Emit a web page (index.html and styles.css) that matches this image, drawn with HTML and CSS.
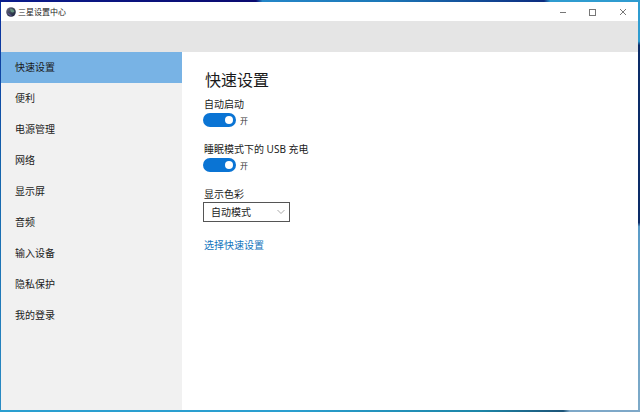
FILE: index.html
```html
<!DOCTYPE html>
<html lang="zh-CN">
<head>
  <meta charset="UTF-8" />
  <title>三星设置中心</title>
  <meta name="viewport" content="width=device-width, initial-scale=1.0" />
  <link rel="stylesheet" href="styles.css">
</head>
<body>

<div class="window">

  <!-- Title bar -->
  <header class="titlebar">
    <svg class="app-icon" viewBox="0 0 10 10" aria-hidden="true">
      <defs>
        <linearGradient id="orb" x1="0" y1="0" x2="1" y2="1">
          <stop offset="0" stop-color="#7c6a90" />
          <stop offset="0.45" stop-color="#3c4a58" />
          <stop offset="1" stop-color="#1b1c3c" />
        </linearGradient>
      </defs>
      <circle cx="5" cy="5" r="4.8" fill="url(#orb)" />
      <path d="M4 1.8 Q7.8 1.8 8.4 4.8 Q6.4 6.4 4.6 4.4 Z" fill="#64907e" />
      <path d="M1.2 5.4 Q2.6 8.8 6 9 Q4.2 6.6 1.2 5.4 Z" fill="#64529a" />
    </svg>
    <span class="title">三星设置中心</span>
    <div class="controls">
      <button aria-label="最小化">
        <svg viewBox="0 0 8 8"><path d="M1 4.5H7" /></svg>
      </button>
      <button aria-label="最大化">
        <svg viewBox="0 0 8 8"><rect x="0.5" y="1.5" width="6" height="6" /></svg>
      </button>
      <button aria-label="关闭">
        <svg viewBox="0 0 8 8"><path d="M1 1L7 7M7 1L1 7" /></svg>
      </button>
    </div>
  </header>

  <div class="banner"></div>

  <div class="content">
    <!-- Sidebar -->
    <nav class="sidebar">
      <a href="#quick" class="active">快速设置</a>
      <a href="#convenience">便利</a>
      <a href="#power">电源管理</a>
      <a href="#network">网络</a>
      <a href="#display">显示屏</a>
      <a href="#audio">音频</a>
      <a href="#input">输入设备</a>
      <a href="#privacy">隐私保护</a>
      <a href="#login">我的登录</a>
    </nav>

    <!-- Quick settings -->
    <main class="panel" id="quick">
      <h1>快速设置</h1>

      <div class="setting">
        <label for="autoStart">自动启动</label>
        <div class="switch-row">
          <input type="checkbox" role="switch" class="switch" id="autoStart" checked>
          <span class="state">开</span>
        </div>
      </div>

      <div class="setting">
        <label for="usbCharge">睡眠模式下的 USB 充电</label>
        <div class="switch-row">
          <input type="checkbox" role="switch" class="switch" id="usbCharge" checked>
          <span class="state">开</span>
        </div>
      </div>

      <div class="setting">
        <label for="colorMode">显示色彩</label>
        <div class="select-box">
          <select id="colorMode">
            <option>自动模式</option>
          </select>
          <svg class="chevron" viewBox="0 0 8 6" aria-hidden="true"><path d="M0.5 1L4 4.5L7.5 1" /></svg>
        </div>
      </div>

      <a href="#select" class="more">选择快速设置</a>
    </main>
  </div>

</div>

</body>
</html>
```

FILE: styles.css
```css
* { box-sizing: border-box; }

/* the desktop shows as a thin edge around the window */
body {
  margin: 0;
  padding: 2px 2px 2px 1px;
  min-height: 100vh;
  display: flex;
  font-family: "Noto Sans", "Noto Sans CJK SC", sans-serif;
  font-size: 10px;
  color: #1a1a1a;
  background:
    linear-gradient(90deg, #0a1c8c 0%, #0a0a70 40%, #2486c8 41%, #1c78b8 60%, #0c2c80 85%, #2f9cd0 86%) top / 100% 2px no-repeat,
    linear-gradient(90deg, #2a9fd0 0%, #2a9fd0 45%, #1c86a8 75%, #1c5478 88%, #7ea8c8 89%) bottom / 100% 2px no-repeat,
    linear-gradient(180deg, #0a2c9c 0%, #1464ac 40%, #2a8cc4 100%) left / 1px 100% no-repeat,
    linear-gradient(180deg, #2f9cd0 0%, #2f9cd0 10%, #0c2c68 11%, #0c2c68 54%, #5a9cc8 55%, #7eaac8 100%) right / 2px 100% no-repeat;
}

.window {
  flex: 1;
  display: flex;
  flex-direction: column;
  background: #fff;
}

.titlebar {
  display: flex;
  align-items: center;
  height: 19px;
  padding-left: 5px;
}

.app-icon {
  width: 10px;
  height: 10px;
  margin-right: 2px;
}

.title {
  flex: 1;
  font-size: 8px;
  line-height: 12px;
}

.controls { display: flex; }

.controls button {
  display: flex;
  align-items: center;
  justify-content: center;
  width: 30px;
  height: 19px;
  padding: 0;
  border: none;
  background: none;
}

.controls svg {
  width: 8px;
  height: 8px;
  fill: none;
  stroke: #777;
}

.banner {
  height: 31px;
  background: #e5e5e5;
}

.content {
  flex: 1;
  display: flex;
}

.sidebar {
  width: 181px;
  background: #f1f1f1;
}

.sidebar a {
  display: block;
  padding-left: 14px;
  line-height: 31px;
  color: #1a1a1a;
  text-decoration: none;
}

.sidebar a.active { background: #78b3e5; }

.panel {
  flex: 1;
  padding: 16px 21px;
}

h1 {
  margin: 0 0 4px;
  padding-left: 2px;
  font-size: 16px;
  font-weight: normal;
  line-height: 24px;
}

.setting { margin-bottom: 13px; }

.setting label {
  display: block;
  padding-left: 1px;
  line-height: 16px;
}

.switch-row {
  display: flex;
  align-items: center;
  gap: 4px;
  height: 16px;
}

.switch {
  appearance: none;
  display: flex;
  align-items: center;
  justify-content: flex-end;
  width: 33px;
  height: 14px;
  margin: 0;
  padding: 0 3px;
  border-radius: 7px;
  background: #999;
}

.switch::before {
  content: "";
  width: 8px;
  height: 8px;
  border-radius: 50%;
  background: #fff;
}

.switch:checked { background: #0a74d4; }
.switch:not(:checked) { justify-content: flex-start; }

.state {
  font-size: 8px;
  color: #333;
}

.select-box {
  position: relative;
  width: 87px;
}

.select-box select {
  appearance: none;
  display: block;
  width: 100%;
  height: 20px;
  padding: 0 7px;
  border: 1px solid #555;
  border-radius: 0;
  background: #fff;
  font: inherit;
  color: inherit;
}

.chevron {
  position: absolute;
  top: 7px;
  right: 5px;
  width: 8px;
  height: 6px;
  fill: none;
  stroke: #aaa;
  pointer-events: none;
}

.more {
  display: inline-block;
  padding-left: 1px;
  line-height: 20px;
  color: #1474bc;
  text-decoration: none;
}
```
